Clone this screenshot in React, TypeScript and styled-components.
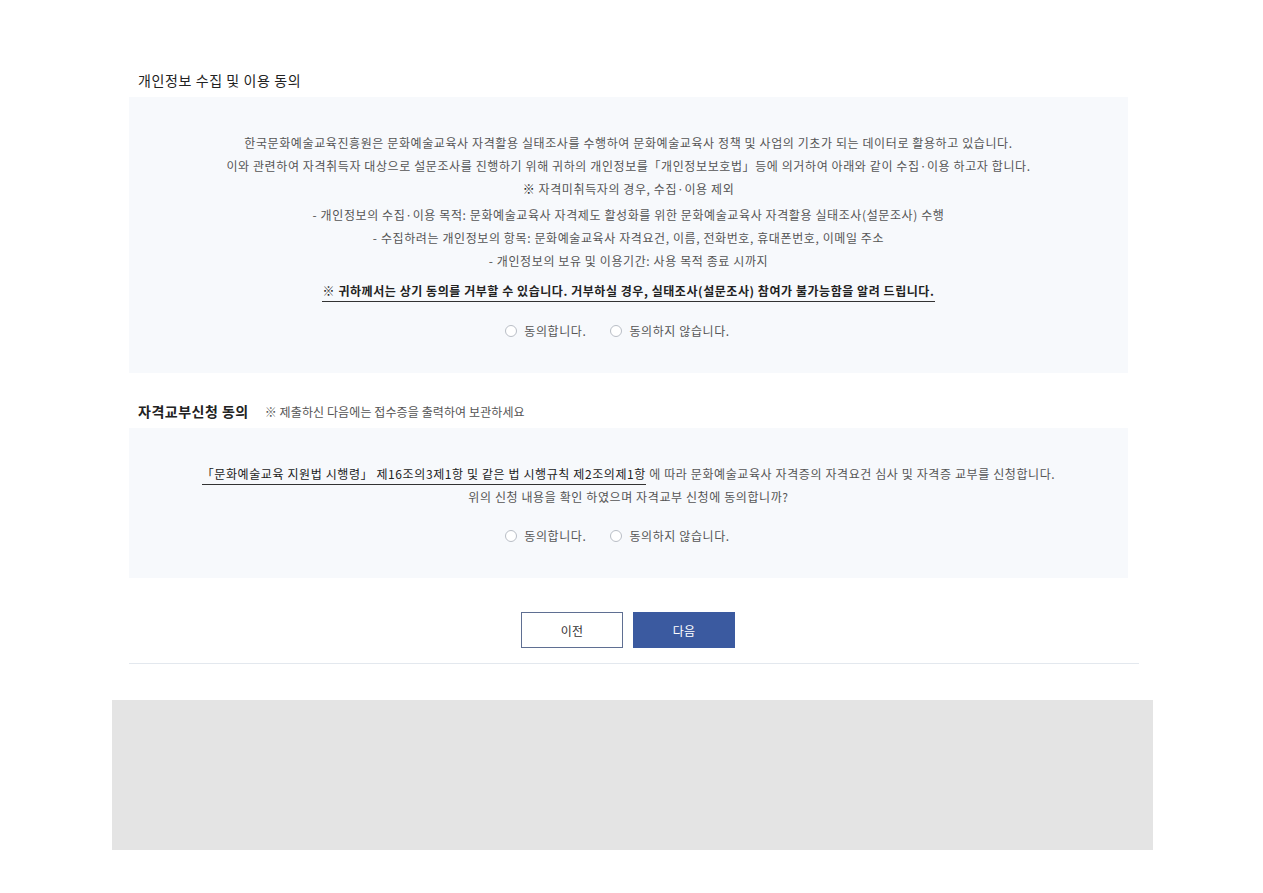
import React from "react";
import styled, { createGlobalStyle } from "styled-components";

const Global = createGlobalStyle`
  html, body { margin: 0; padding: 0; background: #fff; }
  body { font-family: "Noto Sans CJK KR", "Noto Sans", sans-serif; color: #333; }
  * { box-sizing: border-box; }
`;

const Page = styled.div`
  width: 1263px;
  padding-top: 63px;
  padding-bottom: 43px;
`;

const Content = styled.div`
  width: 1010px;
  margin-left: 129px;
`;

const Section = styled.section<{ $gap?: number }>`
  margin-bottom: ${(p) => p.$gap ?? 0}px;
`;

const TitleRow = styled.div`
  display: flex;
  align-items: center;
  gap: 16px;
  padding-left: 9px;
  height: 34px;
`;

const Title = styled.h3<{ $bold?: boolean }>`
  margin: 0;
  font-size: 14px;
  font-weight: ${(p) => (p.$bold ? 700 : 400)};
  color: #222;
  letter-spacing: ${(p) => (p.$bold ? "0.5px" : "0.6px")};
`;

const Note = styled.span`
  font-size: 12px;
  color: #555;
  letter-spacing: 0.1px;
`;

const Box = styled.div<{ $pt: number; $pb: number }>`
  width: 999px;
  background: #f7f9fc;
  padding: ${(p) => p.$pt}px 0 ${(p) => p.$pb}px;
  display: flex;
  flex-direction: column;
  align-items: center;
`;

const Line = styled.p<{ $mt?: number }>`
  margin: ${(p) => p.$mt ?? 0}px 0 0;
  font-size: 12px;
  line-height: 23px;
  color: #555;
  letter-spacing: 0.6px;
  text-align: center;
  white-space: nowrap;
`;

const Strong = styled.span`
  font-weight: 700;
  color: #222;
`;

const Warn = styled.p`
  margin: 11px 0 0;
  font-size: 12px;
  line-height: 16px;
  font-weight: 700;
  color: #222;
  letter-spacing: 0.55px;
  border-bottom: 1px solid #333;
  padding: 0 1px 2px;
  white-space: nowrap;
`;

const Under = styled.span`
  color: #222;
  border-bottom: 1px solid #333;
  padding-bottom: 2px;
`;

const Radios = styled.div<{ $mt: number }>`
  display: flex;
  gap: 24px;
  margin-top: ${(p) => p.$mt}px;
  padding-right: 22px;
`;

const RadioLabel = styled.label`
  display: flex;
  align-items: center;
  gap: 7px;
  font-size: 12px;
  color: #555;
  letter-spacing: 0.6px;
  cursor: pointer;
`;

const Circle = styled.span`
  width: 12px;
  height: 12px;
  border-radius: 50%;
  border: 1px solid #b9bec6;
  background: #fff;
  display: inline-block;
`;

const Buttons = styled.div`
  display: flex;
  justify-content: center;
  gap: 10px;
  padding-top: 34px;
  padding-bottom: 15px;
  padding-right: 12px;
  border-bottom: 1px solid #e3e8ee;
`;

const Button = styled.button<{ $primary?: boolean }>`
  width: 102px;
  height: 36px;
  font-family: inherit;
  font-size: 12px;
  letter-spacing: 0.3px;
  border: 1px solid ${(p) => (p.$primary ? "#3b5aa0" : "#5f6f92")};
  background: ${(p) => (p.$primary ? "#3b5aa0" : "#fff")};
  color: ${(p) => (p.$primary ? "#fff" : "#333")};
  cursor: pointer;
`;

const Footer = styled.div`
  width: 1041px;
  height: 150px;
  margin: 36px 0 0 112px;
  background: #e4e4e4;
`;

function Radio({ label }: { label: string }) {
  return (
    <RadioLabel>
      <Circle />
      {label}
    </RadioLabel>
  );
}

export default function App() {
  return (
    <>
      <Global />
      <Page>
        <Content>
          <Section $gap={21}>
            <TitleRow>
              <Title>개인정보 수집 및 이용 동의</Title>
            </TitleRow>
            <Box $pt={34} $pb={34}>
              <Line>
                한국문화예술교육진흥원은 문화예술교육사 자격활용 실태조사를 수행하여 문화예술교육사 정책 및 사업의 기초가 되는 데이터로 활용하고 있습니다.
              </Line>
              <Line>
                이와 관련하여 자격취득자 대상으로 설문조사를 진행하기 위해 귀하의 개인정보를「개인정보보호법」등에 의거하여 아래와 같이 수집·이용 하고자 합니다.
              </Line>
              <Line>
                <Strong>※</Strong> 자격미취득자의 경우, 수집·이용 제외
              </Line>
              <Line $mt={3}>
                - 개인정보의 수집·이용 목적: 문화예술교육사 자격제도 활성화를 위한 문화예술교육사 자격활용 실태조사(설문조사) 수행
              </Line>
              <Line>- 수집하려는 개인정보의 항목: 문화예술교육사 자격요건, 이름, 전화번호, 휴대폰번호, 이메일 주소</Line>
              <Line>- 개인정보의 보유 및 이용기간: 사용 목적 종료 시까지</Line>
              <Warn>
                ※ 귀하께서는 상기 동의를 거부할 수 있습니다. 거부하실 경우, 실태조사(설문조사) 참여가 불가능함을 알려 드립니다.
              </Warn>
              <Radios $mt={20}>
                <Radio label="동의합니다." />
                <Radio label="동의하지 않습니다." />
              </Radios>
            </Box>
          </Section>
          <Section>
            <TitleRow>
              <Title $bold>자격교부신청 동의</Title>
              <Note>※ 제출하신 다음에는 접수증을 출력하여 보관하세요</Note>
            </TitleRow>
            <Box $pt={34} $pb={34}>
              <Line>
                <Under>「문화예술교육 지원법 시행령」 제16조의3제1항 및 같은 법 시행규칙 제2조의제1항</Under> 에 따라 문화예술교육사 자격증의 자격요건 심사 및 자격증 교부를 신청합니다.
              </Line>
              <Line>위의 신청 내용을 확인 하였으며 자격교부 신청에 동의합니까?</Line>
              <Radios $mt={19}>
                <Radio label="동의합니다." />
                <Radio label="동의하지 않습니다." />
              </Radios>
            </Box>
          </Section>
          <Buttons>
            <Button>이전</Button>
            <Button $primary>다음</Button>
          </Buttons>
        </Content>
        <Footer />
      </Page>
    </>
  );
}
